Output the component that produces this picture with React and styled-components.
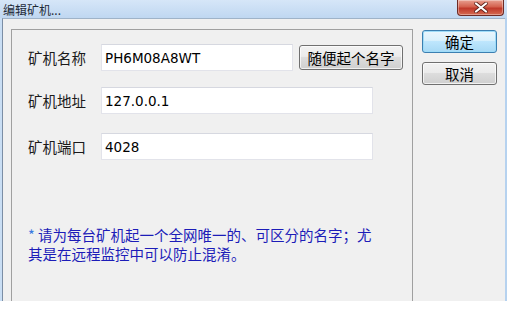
import React from 'react'
import styled, { createGlobalStyle } from 'styled-components'

const Global = createGlobalStyle`
  body {
    margin: 0;
    background: #ffffff;
    font-family: "Noto Sans CJK SC", "Noto Sans", sans-serif;
  }
`

const Window = styled.div`
  width: 507px;
  height: 301px;
  display: flex;
  flex-direction: column;
  background: linear-gradient(90deg, #c9def4 0%, #bcd5f0 40%, #b6d2ef 100%);
  overflow: hidden;
`

const TitleBar = styled.div`
  height: 24px;
  display: flex;
  justify-content: space-between;
  align-items: flex-start;
  background: linear-gradient(180deg, #d6e6f8 0%, #bfd7f1 100%);
`

const Title = styled.div`
  padding: 2px 0 0 3px;
  font-size: 12px;
  line-height: 16px;
  color: #1e2a38;
`

const CloseBtn = styled.div`
  width: 45px;
  height: 15px;
  margin-right: 3px;
  display: flex;
  align-items: center;
  justify-content: center;
  border: 1px solid #6e2b25;
  border-top: none;
  border-radius: 0 0 4px 4px;
  background: linear-gradient(180deg, #e8a090 0%, #d4614e 45%, #c0392a 55%, #d56b52 100%);
  box-shadow: inset 0 0 0 1px rgba(255, 255, 255, 0.35);
`

const Client = styled.div`
  flex: 1;
  display: flex;
  align-items: flex-start;
  gap: 9px;
  margin: 0 2px 0 2px;
  padding: 10px 8px 0 8px;
  background: #f0f0f0;
  border-left: 1px solid #7b8ea5;
  border-top: 1px solid #9fb3c8;
`

const GroupBox = styled.div`
  width: 402px;
  height: 290px;
  border: 1px solid #a0a0a0;
  border-bottom: none;
  display: flex;
  flex-direction: column;
  padding: 14px 0 0 16px;
  box-sizing: border-box;
`

const Row = styled.div`
  display: flex;
  align-items: center;
  gap: 6px;
  margin-bottom: ${p => p.gap}px;
`

const Label = styled.span`
  width: 67px;
  font-size: 14.5px;
  color: #1a1a1a;
`

const Input = styled.div`
  width: ${p => p.w}px;
  height: 27px;
  box-sizing: border-box;
  background: #ffffff;
  border: 1px solid #e2e3ea;
  border-top-color: #d6d8e0;
  padding: 0 3px;
  display: flex;
  align-items: center;
  font-family: "DejaVu Sans", sans-serif;
  font-size: 13.5px;
  color: #000;
`

const Button = styled.div`
  width: ${p => p.w}px;
  height: ${p => p.h}px;
  box-sizing: border-box;
  display: flex;
  align-items: center;
  justify-content: center;
  border: 1px solid ${p => (p.primary ? '#3c7fb1' : '#707070')};
  border-radius: 3px;
  font-size: 14.5px;
  color: #000;
  background: ${p =>
    p.primary
      ? 'linear-gradient(180deg, #eaf6fd 0%, #d9f0fc 45%, #bee6fd 50%, #a7d9f5 100%)'
      : 'linear-gradient(180deg, #f2f2f2 0%, #ebebeb 45%, #dddddd 50%, #cfcfcf 100%)'};
  box-shadow: inset 0 0 0 1px ${p => (p.primary ? '#9fdcf8' : 'rgba(255,255,255,0.7)')};
`

const Side = styled.div`
  display: flex;
  flex-direction: column;
  gap: 9px;
  padding-top: 1px;
`

const Note = styled.div`
  margin: 65px 0 0 0;
  font-size: 14.5px;
  line-height: 19px;
  color: #1c1cb8;
`

const Star = styled.span`
  color: #3a7be0;
`

export default function App() {
  return (
    <>
      <Global />
      <Window>
        <TitleBar>
          <Title>编辑矿机...</Title>
          <CloseBtn>
            <svg width="14" height="11" viewBox="0 0 14 11">
              <path d="M2 1.5 L12 9.5 M12 1.5 L2 9.5" stroke="#5a1f18" strokeWidth="3.6" strokeLinecap="round" />
              <path d="M2 1.5 L12 9.5 M12 1.5 L2 9.5" stroke="#ffffff" strokeWidth="2.2" strokeLinecap="round" />
            </svg>
          </CloseBtn>
        </TitleBar>
        <Client>
          <GroupBox>
            <Row gap={16}>
              <Label>矿机名称</Label>
              <Input w={192}>PH6M08A8WT</Input>
              <Button w={104} h={25}>随便起个名字</Button>
            </Row>
            <Row gap={19}>
              <Label>矿机地址</Label>
              <Input w={272}>127.0.0.1</Input>
            </Row>
            <Row gap={0}>
              <Label>矿机端口</Label>
              <Input w={272}>4028</Input>
            </Row>
            <Note>
              <Star>*</Star> 请为每台矿机起一个全网唯一的、可区分的名字；尤
              <br />
              其是在远程监控中可以防止混淆。
            </Note>
          </GroupBox>
          <Side>
            <Button primary w={75} h={23}>确定</Button>
            <Button w={75} h={23}>取消</Button>
          </Side>
        </Client>
      </Window>
    </>
  )
}
